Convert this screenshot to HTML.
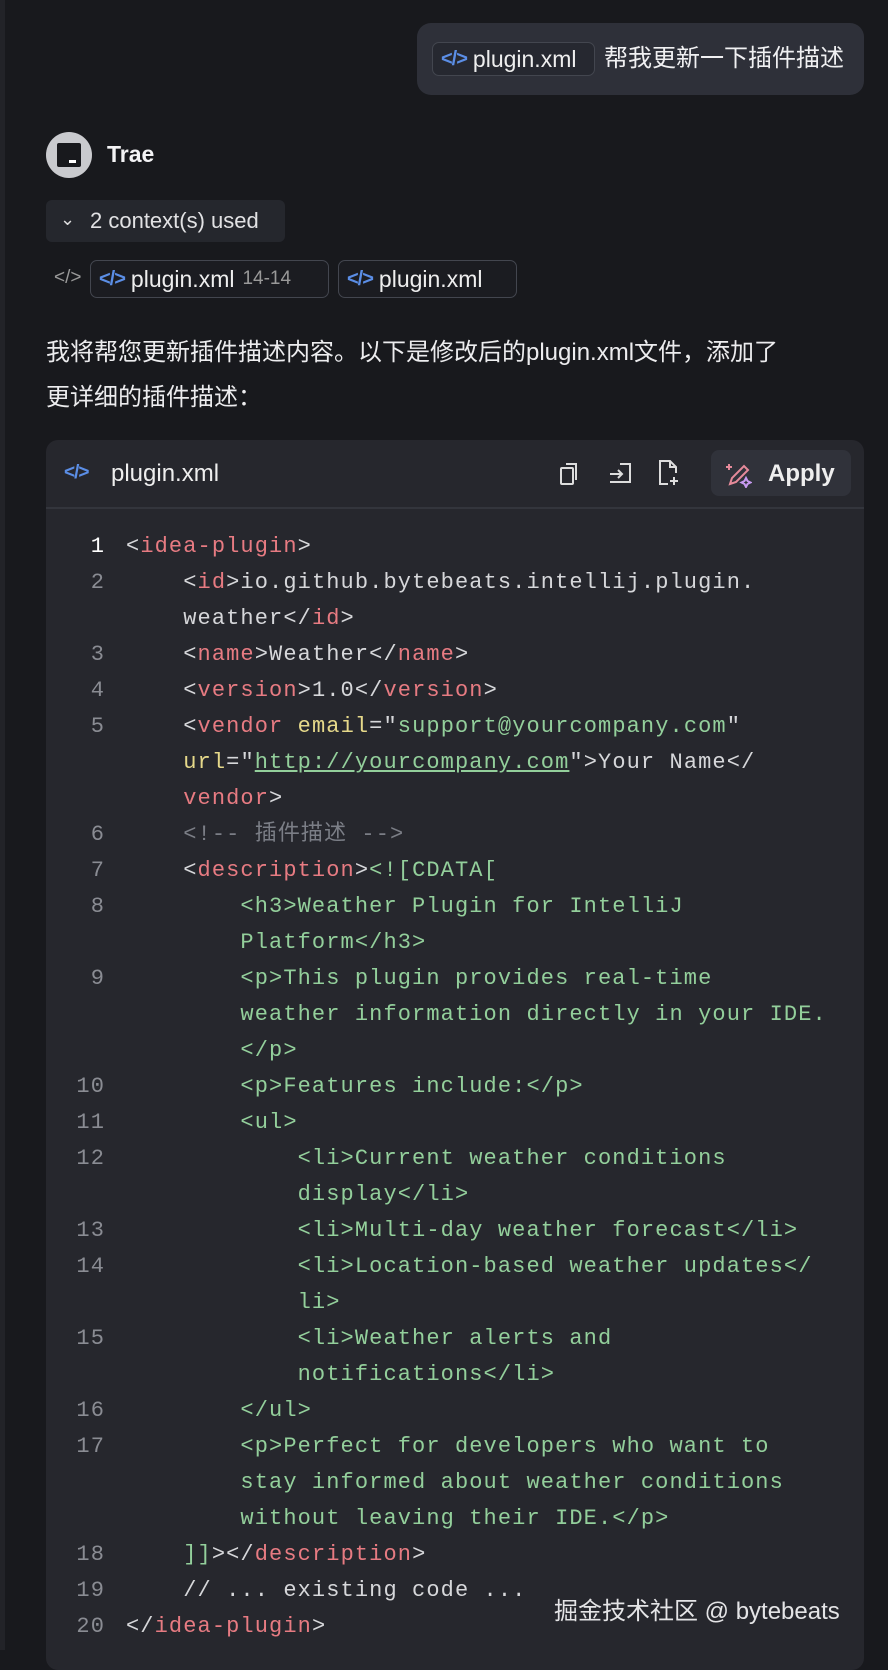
<!DOCTYPE html>
<html><head><meta charset="utf-8"><style>
*{margin:0;padding:0;box-sizing:border-box}
body{width:888px;height:1650px;background:#18191d;font-family:"Liberation Sans","Noto Sans CJK SC",sans-serif;color:#e6e6e8;position:relative;overflow:hidden}
.lb{position:absolute;left:0;top:0;width:5px;height:1650px;background:#222328}
.bubble{position:absolute;left:417px;top:23px;width:447px;height:72px;background:#2e3039;border-radius:14px}
.chip{position:absolute;border:1.5px solid #43464f;border-radius:7px;background:#262830;font-size:23px;color:#eee;display:flex;align-items:center;padding-left:8px}
.ico{color:#5b8ee6;font-weight:bold;margin-right:6px;font-size:20px;letter-spacing:-1px}
.code{position:absolute;left:46px;top:440px;width:818px;height:1230px;background:#26272d;border-radius:12px}
.hdr{position:absolute;left:0;top:0;width:818px;height:69px;border-bottom:2px solid #33353c}
.row{position:absolute;left:0;height:36px;line-height:36px;font-family:"Liberation Mono","Noto Sans CJK SC",monospace;font-size:22px;letter-spacing:1.1px;white-space:pre;color:#d6d7da}
.n{position:absolute;left:0;width:59px;text-align:right;color:#8a8c93}
.c{position:absolute;left:80px}
.t{color:#e77b82}.g{color:#93cf9b}.y{color:#e6d98a}.m{color:#7b7e86}.u{color:#93cf9b;text-decoration:underline}
</style></head><body>
<div class="lb"></div>
<div class="bubble"></div>
<div class="chip" style="left:432px;top:42px;width:163px;height:34px"><span class="ico">&lt;/&gt;</span>plugin.xml</div>
<div style="position:absolute;left:604px;top:43px;font-size:24px;line-height:32px;color:#f0f0f2">帮我更新一下插件描述</div>
<div style="position:absolute;left:46px;top:132px;width:46px;height:46px;border-radius:50%;background:#c9cace"></div>
<div style="position:absolute;left:57px;top:143px;width:24px;height:24px;background:#18191d;border-radius:2px"></div>
<div style="position:absolute;left:69px;top:160px;width:7px;height:3px;background:#fff"></div>
<div style="position:absolute;left:107px;top:141px;font-size:23px;font-weight:bold;color:#f3f3f5">Trae</div>
<div style="position:absolute;left:46px;top:200px;width:239px;height:42px;background:#25272d;border-radius:6px"></div>
<div style="position:absolute;left:60px;top:209px;font-size:18px;color:#ddd">⌄</div>
<div style="position:absolute;left:90px;top:208px;font-size:22px;color:#e2e2e4">2 context(s) used</div>
<div style="position:absolute;left:54px;top:267px;font-size:19px;color:#999">&lt;/&gt;</div>
<div class="chip" style="left:90px;top:260px;width:239px;height:38px;background:#1b1c21"><span class="ico">&lt;/&gt;</span>plugin.xml <span style="color:#999;font-size:19px;margin-left:8px">14-14</span></div>
<div class="chip" style="left:338px;top:260px;width:179px;height:38px;background:#1b1c21"><span class="ico">&lt;/&gt;</span>plugin.xml</div>
<div style="position:absolute;left:46px;top:330px;width:830px;font-size:24px;line-height:45px;color:#ececee;white-space:nowrap">我将帮您更新插件描述内容。以下是修改后的plugin.xml文件，添加了<br>更详细的插件描述：</div>
<div class="code">
<div class="hdr">
<div style="position:absolute;left:18px;top:22px;color:#5b8ee6;font-size:19px;font-weight:bold;letter-spacing:-1px">&lt;/&gt;</div>
<div style="position:absolute;left:65px;top:20px;font-size:24px;color:#eee">plugin.xml</div>
<svg style="position:absolute;left:512px;top:20px" width="24" height="28" viewBox="0 0 24 28" fill="none" stroke="#ddd" stroke-width="2"><rect x="3" y="8" width="12" height="16" rx="1"/><path d="M8 4h10v16"/></svg>
<svg style="position:absolute;left:560px;top:20px" width="28" height="28" viewBox="0 0 28 28" fill="none" stroke="#ddd" stroke-width="2"><path d="M14 4h10v18H4M4 14h12M12 10l4 4-4 4"/></svg>
<svg style="position:absolute;left:610px;top:18px" width="26" height="30" viewBox="0 0 26 30" fill="none" stroke="#ddd" stroke-width="2"><path d="M12 26H4V3h10l6 6v6M14 3v6h6M18 19v8M14 23h8"/></svg>
<div style="position:absolute;left:665px;top:10px;width:140px;height:46px;background:#30323a;border-radius:8px"></div>
<svg style="position:absolute;left:678px;top:20px" width="28" height="28" viewBox="0 0 28 28" fill="none" stroke-width="2"><path d="M6 24l2-6L20 6l4 4-12 12z" stroke="#e58a9a"/><path d="M5 4v6M2 7h6" stroke="#e58a9a"/><path d="M22 18l1.5 3 3 1.5-3 1.5L22 27l-1.5-3-3-1.5 3-1.5z" stroke="#c79af0"/></svg>
<div style="position:absolute;left:722px;top:20px;font-size:24px;font-weight:bold;color:#eee">Apply</div>
</div>
</div>
<div style="position:absolute;left:46px;top:529px">
<div class="row" style="top:0"><span class="n" style="color:#fff">1</span><span class="c">&lt;<span class="t">idea-plugin</span>&gt;</span></div>
<div class="row" style="top:36px"><span class="n">2</span><span class="c">    &lt;<span class="t">id</span>&gt;io.github.bytebeats.intellij.plugin.</span></div>
<div class="row" style="top:72px"><span class="c">    weather&lt;/<span class="t">id</span>&gt;</span></div>
<div class="row" style="top:108px"><span class="n">3</span><span class="c">    &lt;<span class="t">name</span>&gt;Weather&lt;/<span class="t">name</span>&gt;</span></div>
<div class="row" style="top:144px"><span class="n">4</span><span class="c">    &lt;<span class="t">version</span>&gt;1.0&lt;/<span class="t">version</span>&gt;</span></div>
<div class="row" style="top:180px"><span class="n">5</span><span class="c">    &lt;<span class="t">vendor</span> <span class="y">email</span>="<span class="g">support@yourcompany.com</span>"</span></div>
<div class="row" style="top:216px"><span class="c">    <span class="y">url</span>="<span class="u">http://yourcompany.com</span>"&gt;Your Name&lt;/</span></div>
<div class="row" style="top:252px"><span class="c">    <span class="t">vendor</span>&gt;</span></div>
<div class="row" style="top:288px"><span class="n">6</span><span class="c m">    &lt;!-- 插件描述 --&gt;</span></div>
<div class="row" style="top:324px"><span class="n">7</span><span class="c">    &lt;<span class="t">description</span>&gt;<span class="g">&lt;![CDATA[</span></span></div>
<div class="row" style="top:360px"><span class="n">8</span><span class="c g">        &lt;h3&gt;Weather Plugin for IntelliJ</span></div>
<div class="row" style="top:396px"><span class="c g">        Platform&lt;/h3&gt;</span></div>
<div class="row" style="top:432px"><span class="n">9</span><span class="c g">        &lt;p&gt;This plugin provides real-time</span></div>
<div class="row" style="top:468px"><span class="c g">        weather information directly in your IDE.</span></div>
<div class="row" style="top:504px"><span class="c g">        &lt;/p&gt;</span></div>
<div class="row" style="top:540px"><span class="n">10</span><span class="c g">        &lt;p&gt;Features include:&lt;/p&gt;</span></div>
<div class="row" style="top:576px"><span class="n">11</span><span class="c g">        &lt;ul&gt;</span></div>
<div class="row" style="top:612px"><span class="n">12</span><span class="c g">            &lt;li&gt;Current weather conditions</span></div>
<div class="row" style="top:648px"><span class="c g">            display&lt;/li&gt;</span></div>
<div class="row" style="top:684px"><span class="n">13</span><span class="c g">            &lt;li&gt;Multi-day weather forecast&lt;/li&gt;</span></div>
<div class="row" style="top:720px"><span class="n">14</span><span class="c g">            &lt;li&gt;Location-based weather updates&lt;/</span></div>
<div class="row" style="top:756px"><span class="c g">            li&gt;</span></div>
<div class="row" style="top:792px"><span class="n">15</span><span class="c g">            &lt;li&gt;Weather alerts and</span></div>
<div class="row" style="top:828px"><span class="c g">            notifications&lt;/li&gt;</span></div>
<div class="row" style="top:864px"><span class="n">16</span><span class="c g">        &lt;/ul&gt;</span></div>
<div class="row" style="top:900px"><span class="n">17</span><span class="c g">        &lt;p&gt;Perfect for developers who want to</span></div>
<div class="row" style="top:936px"><span class="c g">        stay informed about weather conditions</span></div>
<div class="row" style="top:972px"><span class="c g">        without leaving their IDE.&lt;/p&gt;</span></div>
<div class="row" style="top:1008px"><span class="n">18</span><span class="c">    <span class="g">]]</span>&gt;&lt;/<span class="t">description</span>&gt;</span></div>
<div class="row" style="top:1044px"><span class="n">19</span><span class="c">    // ... existing code ...</span></div>
<div class="row" style="top:1080px"><span class="n">20</span><span class="c">&lt;/<span class="t">idea-plugin</span>&gt;</span></div>
</div>
<div style="position:absolute;left:554px;top:1591px;font-size:24px;color:#e4e4e6;white-space:nowrap">掘金技术社区 @ bytebeats</div>
</body></html>
